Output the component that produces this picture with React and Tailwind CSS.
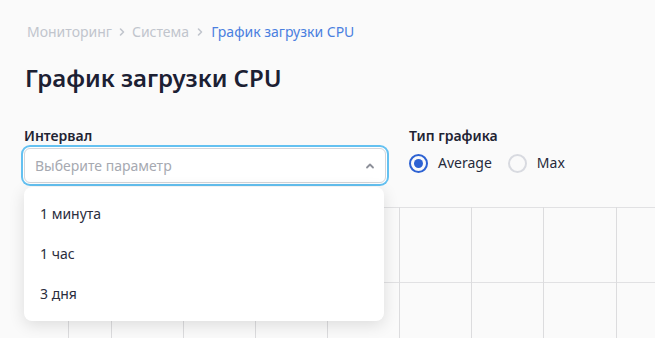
import React, { useState } from 'react';

const Chevron = ({ className }) => (
  <svg viewBox="0 0 10 10" className={className} fill="none" stroke="currentColor" strokeWidth="1.6" strokeLinecap="round" strokeLinejoin="round">
    <path d="M3.5 2 L6.5 5 L3.5 8" />
  </svg>
);

const ChartGrid = () => {
  const cols = [68, 111, 183, 255, 327, 399, 471, 543, 616];
  const rows = [0, 75];
  return (
    <svg className="block w-full h-full" viewBox="0 0 655 131" preserveAspectRatio="none">
      {rows.map((y) => (
        <line key={y} x1="24" x2="655" y1={y + 0.5} y2={y + 0.5} stroke="#e1e1e3" strokeWidth="1" />
      ))}
      {cols.map((x) => (
        <line key={x} x1={x + 0.5} x2={x + 0.5} y1="0" y2="131" stroke="#dcdcde" strokeWidth="1" />
      ))}
    </svg>
  );
};

const Radio = ({ checked, label, onClick }) => (
  <button type="button" onClick={onClick} className="flex items-center gap-[10px]">
    <span
      className={`w-[19px] h-[19px] rounded-full border-2 flex items-center justify-center ${
        checked ? 'border-[#2d62d3]' : 'border-[#d8dae0]'
      }`}
    >
      {checked && <span className="w-[9px] h-[9px] rounded-full bg-[#2d62d3]" />}
    </span>
    <span className="text-sm text-[#262a3b]">{label}</span>
  </button>
);

export default function App() {
  const [type, setType] = useState('average');
  const options = ['1 минута', '1 час', '3 дня'];

  return (
    <div className="w-[655px] h-[338px] overflow-hidden bg-[#fafafa] flex flex-col" style={{ fontFamily: '"Noto Sans", "Open Sans", sans-serif' }}>
      <div className="px-6 pt-[22px]">
        <nav className="flex items-center text-sm leading-5 pl-[3px]">
          <span className="text-[#c1c5cd]">Мониторинг</span>
          <Chevron className="w-[10px] h-[10px] mx-[5px] text-[#c1c5cd]" />
          <span className="text-[#c1c5cd]">Система</span>
          <Chevron className="w-[10px] h-[10px] mx-[6px] text-[#c1c5cd]" />
          <span className="text-[#4a7fe0]">График загрузки CPU</span>
        </nav>

        <h1 className="mt-[22px] text-2xl leading-7 font-semibold text-[#1c2033] pl-px">График загрузки CPU</h1>

        <div className="mt-[34px] flex gap-[23px]">
          <div className="w-[362px] relative">
            <label className="block text-sm leading-5 font-semibold text-[#1f2333] mb-[2px]">Интервал</label>
            <div className="h-[35px] rounded-md border border-[#d3d5da] bg-white ring-2 ring-[#64c1f1] ring-offset-1 flex items-center justify-between px-[10px]">
              <span className="text-sm text-[#a6a9b1]">Выберите параметр</span>
              <svg viewBox="0 0 10 10" className="w-[10px] h-[10px] text-[#8d9099]" fill="none" stroke="currentColor" strokeWidth="1.8" strokeLinecap="round" strokeLinejoin="round">
                <path d="M2 6.5 L5 3.5 L8 6.5" />
              </svg>
            </div>
            <ul className="absolute left-0 top-[61px] w-[360px] z-10 bg-white rounded-lg shadow-[0_4px_16px_rgba(0,0,0,0.12)] py-[7px]">
              {options.map((o) => (
                <li key={o} className="h-10 flex items-center px-4 text-sm text-[#2a2d3d]">
                  {o}
                </li>
              ))}
            </ul>
          </div>

          <div>
            <label className="block text-sm leading-5 font-semibold text-[#1f2333] mb-[7px]">Тип графика</label>
            <div className="flex items-center gap-4">
              <Radio checked={type === 'average'} label="Average" onClick={() => setType('average')} />
              <Radio checked={type === 'max'} label="Max" onClick={() => setType('max')} />
            </div>
          </div>
        </div>
      </div>

      <div className="mt-6 flex-1">
        <ChartGrid />
      </div>
    </div>
  );
}
